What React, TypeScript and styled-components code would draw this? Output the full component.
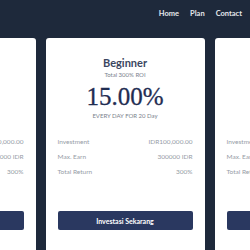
import React from "react";
import styled, { createGlobalStyle } from "styled-components";

const GlobalStyle = createGlobalStyle`
  html, body {
    margin: 0;
    padding: 0;
    background: #1e293b;
  }
  body {
    font-family: Lato, "Open Sans", sans-serif;
    overflow: hidden;
  }
`;

interface Plan {
  name: string;
  roi: string;
  rate: string;
  period: string;
  investment: string;
  maxEarn: string;
  totalReturn: string;
}

const plan: Plan = {
  name: "Beginner",
  roi: "Total 300% ROI",
  rate: "15.00%",
  period: "EVERY DAY FOR 20 Day",
  investment: "IDR100,000.00",
  maxEarn: "300000 IDR",
  totalReturn: "300%",
};

const plans = [plan, plan, plan];

function PlanCard({ data }: { data: Plan }) {
  return (
    <Card>
      <Title>{data.name}</Title>
      <Roi>{data.roi}</Roi>
      <Rate>{data.rate}</Rate>
      <Period>{data.period}</Period>
      <Details>
        <Row>
          <span>Investment</span>
          <span>{data.investment}</span>
        </Row>
        <Row>
          <span>Max. Earn</span>
          <span>{data.maxEarn}</span>
        </Row>
        <Row>
          <span>Total Return</span>
          <span>{data.totalReturn}</span>
        </Row>
      </Details>
      <Button>Investasi Sekarang</Button>
    </Card>
  );
}

export default function App() {
  return (
    <Page>
      <GlobalStyle />
      <Header>
        <Nav>
          <NavLink>Home</NavLink>
          <NavLink>Plan</NavLink>
          <NavLink>Contact</NavLink>
        </Nav>
      </Header>
      <Cards>
        {plans.map((p, i) => (
          <PlanCard key={i} data={p} />
        ))}
      </Cards>
    </Page>
  );
}

const Page = styled.div`
  width: 250px;
  height: 250px;
  overflow: hidden;
  background: #1e293b;
`;

const Header = styled.header`
  height: 38px;
  display: flex;
  justify-content: flex-end;
  align-items: center;
  padding: 0 8px 11px 0;
  box-sizing: border-box;
`;

const Nav = styled.nav`
  display: flex;
  gap: 11px;
`;

const NavLink = styled.a`
  color: #e5e7eb;
  font-size: 7.5px;
  font-weight: 700;
`;

const Cards = styled.div`
  display: flex;
  justify-content: center;
  gap: 10px;
`;

const Card = styled.div`
  flex: 0 0 159px;
  height: 220px;
  background: #ffffff;
  border-radius: 3px 3px 0 0;
  padding: 18px 12px 0;
  box-sizing: border-box;
  display: flex;
  flex-direction: column;
  align-items: stretch;
  text-align: center;
`;

const Title = styled.div`
  font-size: 11px;
  line-height: 14px;
  font-weight: 700;
  color: #3b4660;
`;

const Roi = styled.div`
  margin-top: 1px;
  font-size: 6px;
  line-height: 8px;
  color: #7b828d;
`;

const Rate = styled.div`
  margin-top: 3px;
  font-family: "Liberation Serif", serif;
  font-size: 25px;
  line-height: 30px;
  color: #1f2d52;
  -webkit-text-stroke: 0.3px #1f2d52;
`;

const Period = styled.div`
  font-size: 6px;
  line-height: 8px;
  color: #7b828d;
`;

const Details = styled.div`
  margin-top: 18px;
  display: flex;
  flex-direction: column;
  gap: 7px;
`;

const Row = styled.div`
  display: flex;
  justify-content: space-between;
  white-space: nowrap;
  font-size: 6.5px;
  line-height: 8px;
  color: #969ca6;
`;

const Button = styled.button`
  margin-top: 35px;
  height: 19px;
  border: none;
  border-radius: 2px;
  background: #2a3860;
  color: #ffffff;
  font-family: Lato, sans-serif;
  font-size: 7px;
  font-weight: 700;
  white-space: nowrap;
  cursor: pointer;
`;
